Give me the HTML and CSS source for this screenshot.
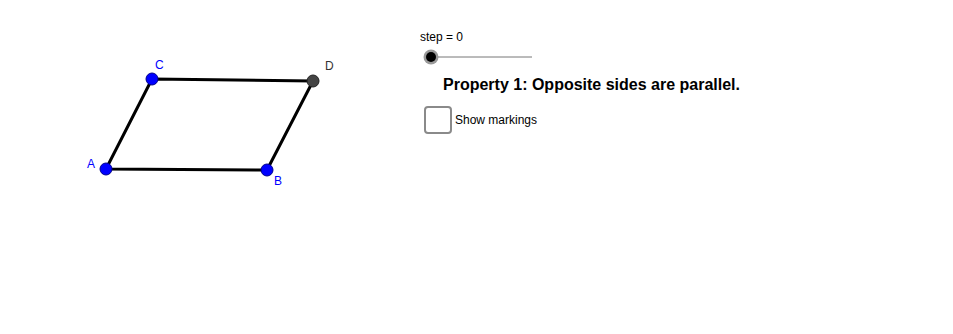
FILE: index.html
```html
<!DOCTYPE html>
<html lang="en">
<head>
    <meta charset="UTF-8">
    <title>Parallelogram Properties</title>
    <link rel="stylesheet" href="styles.css">
</head>
<body>
    <div class="applet">
        <!-- Geometry canvas -->
        <svg class="canvas" width="953" height="334" viewBox="0 0 953 334">
            <polygon points="106,169 152,79 313,81 267,170" fill="none" stroke="#000" stroke-width="3" stroke-linejoin="round"/>
            <circle cx="106" cy="169" r="6" fill="#0000ff" stroke="#00008b" stroke-width="1"/>
            <circle cx="152" cy="79" r="6" fill="#0000ff" stroke="#00008b" stroke-width="1"/>
            <circle cx="267" cy="170" r="6" fill="#0000ff" stroke="#00008b" stroke-width="1"/>
            <circle cx="313" cy="81" r="6" fill="#444" stroke="#222" stroke-width="1"/>
            <text class="pt-label blue" x="87" y="168">A</text>
            <text class="pt-label blue" x="274" y="185">B</text>
            <text class="pt-label blue" x="155" y="69">C</text>
            <text class="pt-label" x="325" y="70">D</text>
            <!-- slider -->
            <line x1="431" y1="57" x2="532" y2="57" stroke="#777" stroke-width="1"/>
            <circle cx="431" cy="57" r="7.5" fill="#9a9a9a"/>
            <circle cx="431" cy="57" r="5" fill="#000"/>
        </svg>

        <div class="slider-label">step = 0</div>
        <div class="property">Property 1: Opposite sides are parallel.</div>
        <label class="check">
            <span class="box"></span>
            <span>Show markings</span>
        </label>
    </div>
</body>
</html>
```

FILE: styles.css
```css
html, body {
    margin: 0;
    background: #fff;
}
body {
    font-family: "Liberation Sans", Arial, sans-serif;
}
.applet {
    position: relative;
    width: 953px;
    height: 334px;
    overflow: hidden;
}
.canvas {
    position: absolute;
    left: 0;
    top: 0;
}
.pt-label {
    font-family: "Liberation Sans", Arial, sans-serif;
    font-size: 12px;
    fill: #333;
}
.pt-label.blue {
    fill: #0000ff;
}
.slider-label {
    position: absolute;
    left: 420px;
    top: 30px;
    font-size: 12px;
    color: #000;
}
.property {
    position: absolute;
    left: 443px;
    top: 76px;
    font-size: 16px;
    font-weight: bold;
    color: #000;
}
.check {
    position: absolute;
    left: 424px;
    top: 106px;
    display: flex;
    align-items: center;
    gap: 3px;
    font-size: 12px;
    color: #000;
}
.box {
    width: 24px;
    height: 24px;
    border: 2px solid #8a8a8a;
    border-radius: 4px;
    background: #fff;
}
```
